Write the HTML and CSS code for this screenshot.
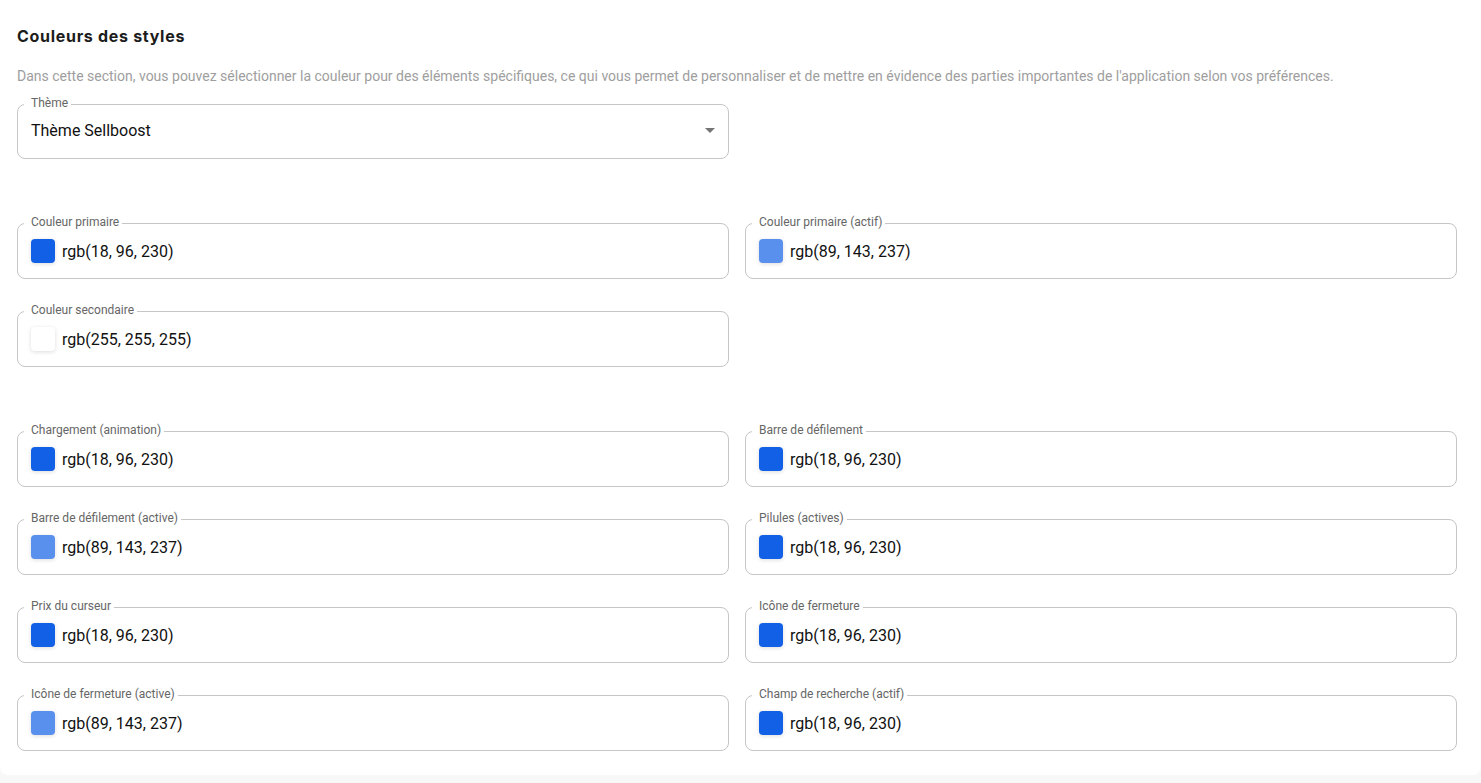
FILE: index.html
```html
<!DOCTYPE html>
<html lang="fr">
<head>
  <meta charset="UTF-8">
  <meta name="viewport" content="width=device-width, initial-scale=1.0">
  <title>Couleurs des styles</title>
  <link rel="stylesheet" href="styles.css">
</head>

<body>
<div class="card">
  <h2 class="titre">Couleurs des styles</h2>
  <p class="description">Dans cette section, vous pouvez sélectionner la couleur pour des éléments spécifiques, ce qui vous permet de personnaliser et de mettre en évidence des parties importantes de l'application selon vos préférences.</p>

  <div class="grille">
    <fieldset class="champ champ-select">
      <legend>Thème</legend>
      <div class="ligne">
        <span class="valeur">Thème Sellboost</span>
        <span class="fleche"></span>
      </div>
    </fieldset>
  </div>

  <div class="grille section">
    <fieldset class="champ">
      <legend>Couleur primaire</legend>
      <div class="ligne"><span class="pastille bleu"></span><span class="valeur">rgb(18, 96, 230)</span></div>
    </fieldset>
    <fieldset class="champ">
      <legend>Couleur primaire (actif)</legend>
      <div class="ligne"><span class="pastille bleu-clair"></span><span class="valeur">rgb(89, 143, 237)</span></div>
    </fieldset>
    <fieldset class="champ">
      <legend>Couleur secondaire</legend>
      <div class="ligne"><span class="pastille blanc"></span><span class="valeur">rgb(255, 255, 255)</span></div>
    </fieldset>
  </div>

  <div class="grille section">
    <fieldset class="champ">
      <legend>Chargement (animation)</legend>
      <div class="ligne"><span class="pastille bleu"></span><span class="valeur">rgb(18, 96, 230)</span></div>
    </fieldset>
    <fieldset class="champ">
      <legend>Barre de défilement</legend>
      <div class="ligne"><span class="pastille bleu"></span><span class="valeur">rgb(18, 96, 230)</span></div>
    </fieldset>
    <fieldset class="champ">
      <legend>Barre de défilement (active)</legend>
      <div class="ligne"><span class="pastille bleu-clair"></span><span class="valeur">rgb(89, 143, 237)</span></div>
    </fieldset>
    <fieldset class="champ">
      <legend>Pilules (actives)</legend>
      <div class="ligne"><span class="pastille bleu"></span><span class="valeur">rgb(18, 96, 230)</span></div>
    </fieldset>
    <fieldset class="champ">
      <legend>Prix du curseur</legend>
      <div class="ligne"><span class="pastille bleu"></span><span class="valeur">rgb(18, 96, 230)</span></div>
    </fieldset>
    <fieldset class="champ">
      <legend>Icône de fermeture</legend>
      <div class="ligne"><span class="pastille bleu"></span><span class="valeur">rgb(18, 96, 230)</span></div>
    </fieldset>
    <fieldset class="champ">
      <legend>Icône de fermeture (active)</legend>
      <div class="ligne"><span class="pastille bleu-clair"></span><span class="valeur">rgb(89, 143, 237)</span></div>
    </fieldset>
    <fieldset class="champ">
      <legend>Champ de recherche (actif)</legend>
      <div class="ligne"><span class="pastille bleu"></span><span class="valeur">rgb(18, 96, 230)</span></div>
    </fieldset>
  </div>
</div>
</body>
</html>
```

FILE: styles.css
```css
body {
  margin: 0;
  background: #f8f8f8;
  font-family: Roboto, "Liberation Sans", sans-serif;
  color: #1a1a1a;
}
.card {
  background: #fff;
  border-radius: 0 0 8px 8px;
  padding: 24px 24px 24px 17px;
}
.titre {
  margin: 0;
  font-family: Inter, "Liberation Sans", sans-serif;
  font-size: 16px;
  font-weight: 700;
  line-height: 24px;
  letter-spacing: 0.7px;
  color: #1c1c1c;
}
.description {
  margin: 18px 0 10px;
  font-size: 14px;
  line-height: 20px;
  color: #9e9e9e;
}
.grille {
  display: grid;
  grid-template-columns: 1fr 1fr;
  column-gap: 16px;
  row-gap: 24px;
}
.section {
  margin-top: 56px;
}

/* champ avec contour entaillé */
.champ {
  margin: 0;
  min-width: 0;
  padding: 0 13px 7px;
  border: 1px solid #c6c6c6;
  border-radius: 8px;
}
.champ legend {
  margin-left: -7px;
  padding: 0 3px 2px 7px;
  font-size: 12px;
  line-height: 14px;
  color: #666;
}
.ligne {
  display: flex;
  align-items: center;
  gap: 7px;
  height: 40px;
}
.valeur {
  font-size: 16px;
  color: #111;
}
.champ-select {
  padding-bottom: 10px;
}
.champ-select .ligne {
  height: 36px;
  justify-content: space-between;
}
.fleche {
  width: 0;
  height: 0;
  border-left: 5px solid transparent;
  border-right: 5px solid transparent;
  border-top: 5px solid #757575;
}
.pastille {
  width: 24px;
  height: 24px;
  border-radius: 4px;
  flex-shrink: 0;
  box-shadow: 0 1px 4px rgba(0, 0, 0, 0.14);
}
.bleu { background: rgb(18, 96, 230); }
.bleu-clair { background: rgb(89, 143, 237); }
.blanc { background: rgb(255, 255, 255); }
```
